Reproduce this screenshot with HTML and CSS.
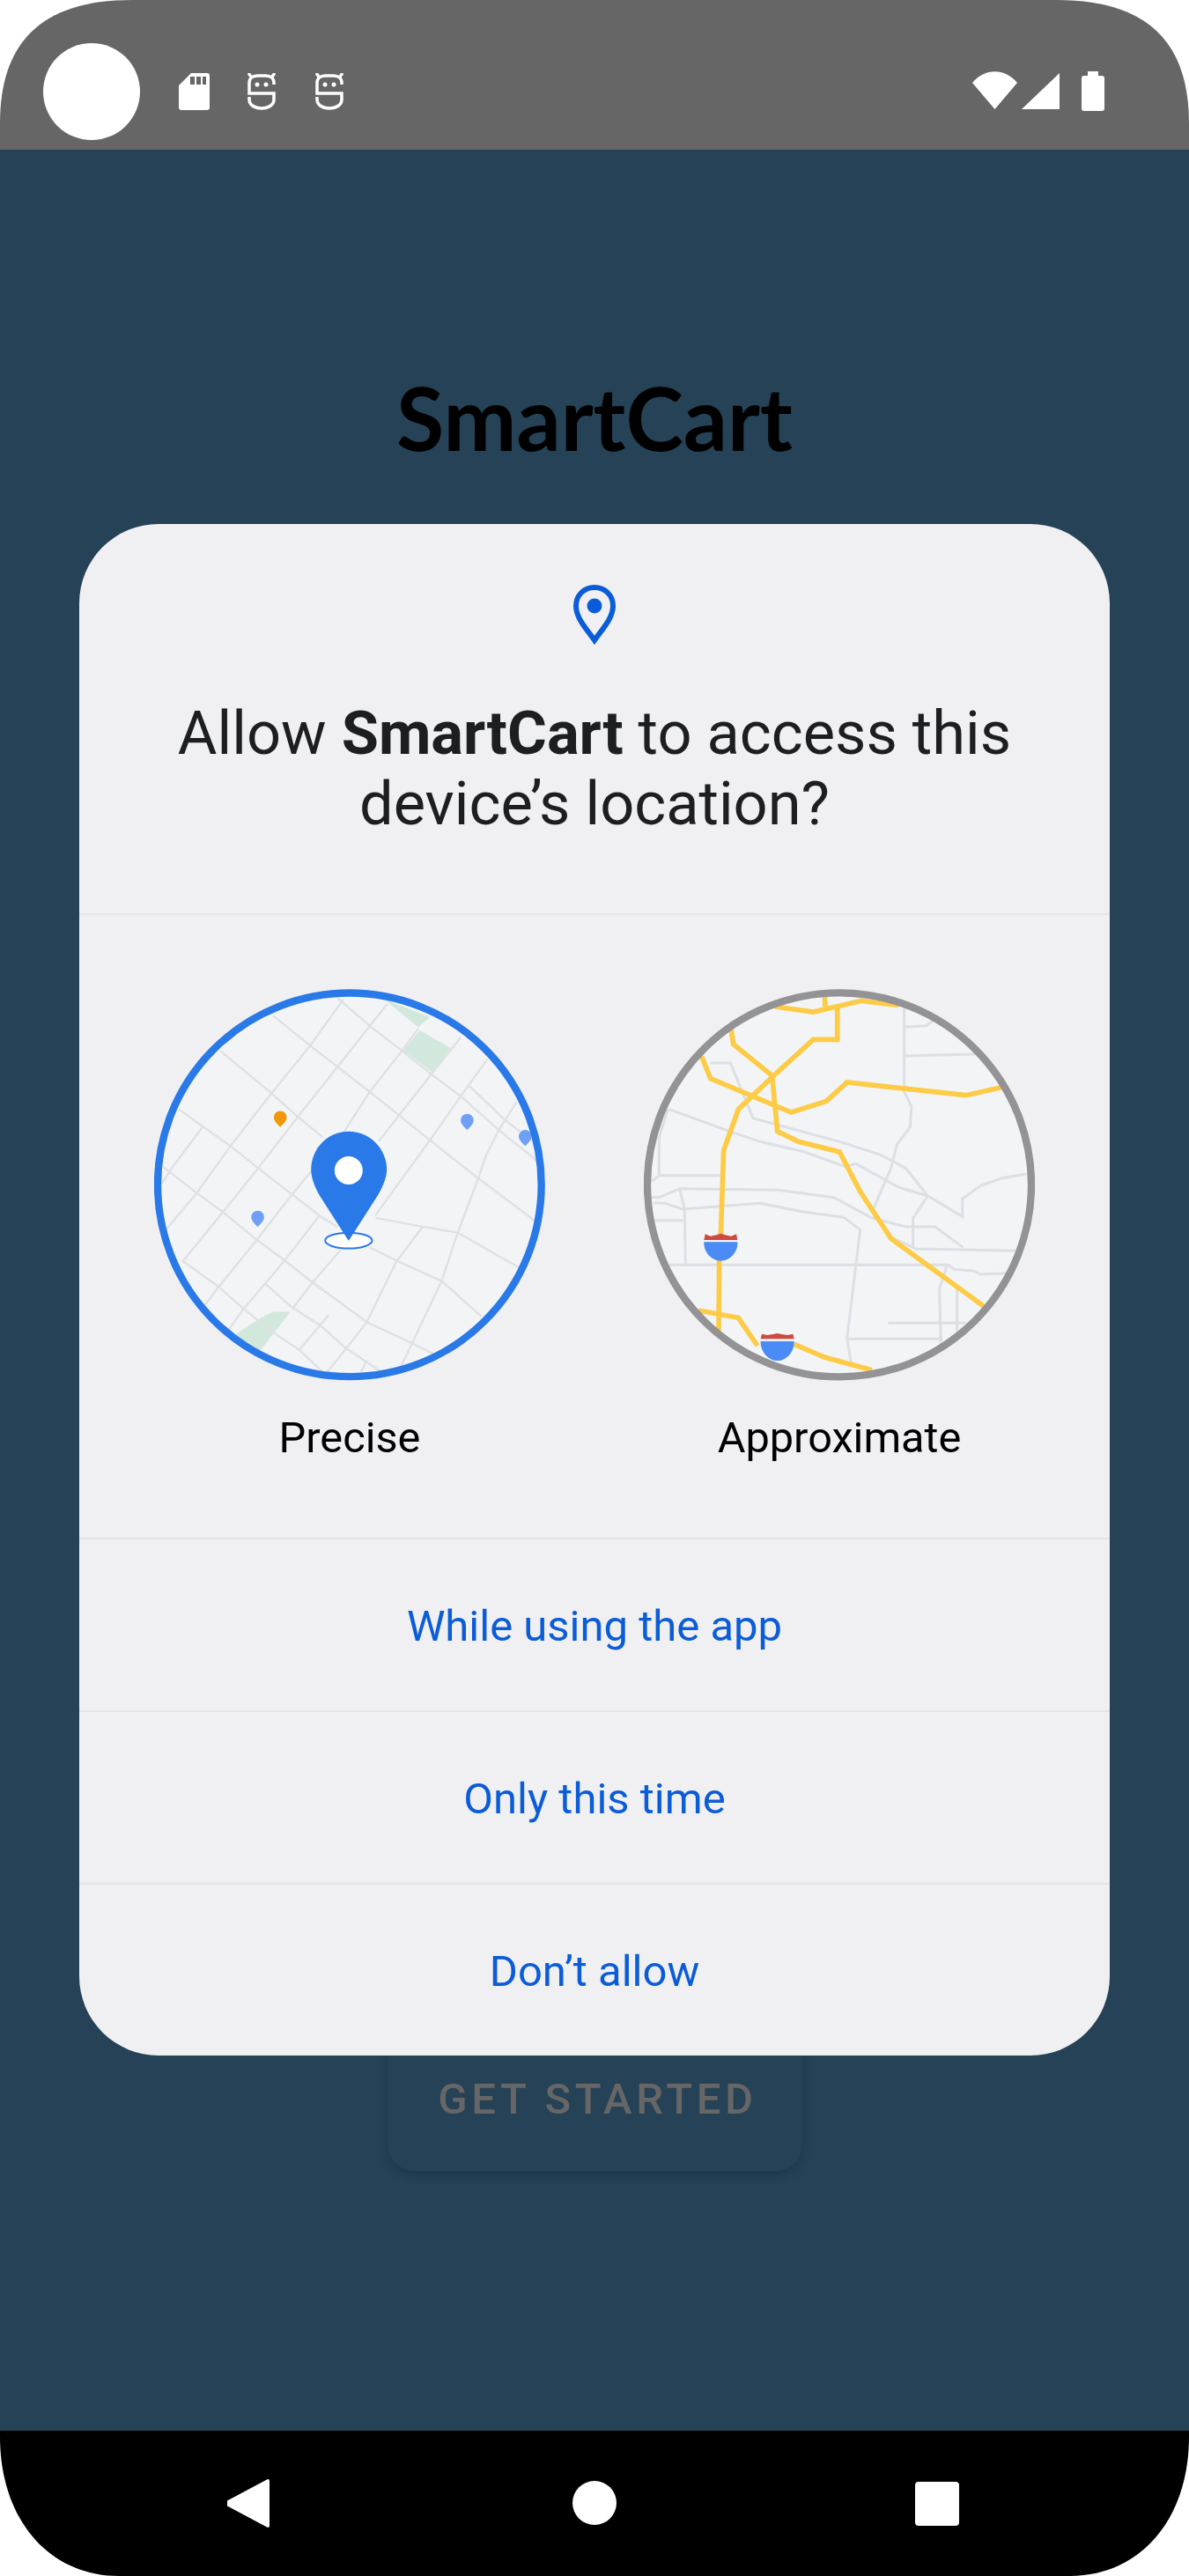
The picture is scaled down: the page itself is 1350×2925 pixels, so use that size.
FILE: index.html

```html
<!DOCTYPE html>
<html lang="en">
<head>
    <meta charset="UTF-8">
    <meta name="viewport" content="width=device-width, initial-scale=1.0">
    <title>SmartCart</title>
    <link rel="stylesheet" href="styles.css">
</head>
<body>
    <div class="device">
        <header class="status-bar">
            <div class="status-left">
                <span class="camera"></span>
                <svg class="icon-sd" viewBox="0 0 35 42">
                    <path fill="#fff" fill-rule="evenodd" d="M14 0H32a3 3 0 0 1 3 3V39a3 3 0 0 1-3 3H3a3 3 0 0 1-3-3V14ZM13 4V13H18V4ZM20 4V13H25V4ZM27 4V13H31V4Z"/>
                </svg>
                <svg class="icon-debug" viewBox="0 0 32 42">
                    <g fill="none" stroke="#fff" stroke-width="3.500">
                        <path d="M30 13V11C30 6 26 3 21 3H11C6 3 2 6 2 11V23H30V30C30 36 24 40 16 40S2 36 2 30V27"/>
                        <path d="M4 4L1 0M28 4L31 0"/>
                    </g>
                    <circle cx="11" cy="13" r="2.500" fill="#fff"/>
                    <circle cx="21" cy="13" r="2.500" fill="#fff"/>
                </svg>
                <svg class="icon-debug" viewBox="0 0 32 42">
                    <g fill="none" stroke="#fff" stroke-width="3.500">
                        <path d="M30 13V11C30 6 26 3 21 3H11C6 3 2 6 2 11V23H30V30C30 36 24 40 16 40S2 36 2 30V27"/>
                        <path d="M4 4L1 0M28 4L31 0"/>
                    </g>
                    <circle cx="11" cy="13" r="2.500" fill="#fff"/>
                    <circle cx="21" cy="13" r="2.500" fill="#fff"/>
                </svg>
            </div>
            <div class="status-right">
                <svg class="icon-wifi" viewBox="0 0 51 43"><path fill="#fff" d="M0 13C14 -4 37 -4 51 13L25.500 43Z"/></svg>
                <svg class="icon-signal" viewBox="0 0 43 41"><path fill="#fff" d="M43 0V41H0Z"/></svg>
                <svg class="icon-battery" viewBox="0 0 26 45"><path fill="#fff" d="M7 0H19V5H23a3 3 0 0 1 3 3V42a3 3 0 0 1-3 3H3a3 3 0 0 1-3-3V8a3 3 0 0 1 3-3H7Z"/></svg>
            </div>
        </header>

        <main class="app">
            <h1 class="app-title">SmartCart</h1>
            <div class="start-btn">GET STARTED</div>

            <section class="dialog">
                <div class="dialog-head">
                    <svg class="icon-pin" viewBox="0 0 48 69">
                        <path fill="none" stroke="#0b5cd8" stroke-width="6" d="M24 3C12 3 3 12 3 24C3 38 15 50 24 63C33 50 45 38 45 24C45 12 36 3 24 3Z"/>
                        <circle cx="24" cy="24" r="8.500" fill="#0b5cd8"/>
                    </svg>
                    <h2 class="dialog-title">Allow <b>SmartCart</b> to access this device’s location?</h2>
                </div>

                <div class="accuracy">
                    <div class="accuracy-item">
                        <svg class="map" viewBox="75 70 1333 1335">
                            <defs>
                                <clipPath id="clip-precise"><circle cx="741" cy="737" r="654"/></clipPath>
                            </defs>
                            <g clip-path="url(#clip-precise)">
                                <rect x="75" y="70" width="1333" height="1335" fill="#f2f4f6"/>
                                <g fill="#d3e8dc">
                                    <path d="M860 105L1015 165L975 200Z"/>
                                    <path d="M980 210L1085 270L1025 355L925 280Z"/>
                                    <path d="M340 1255L440 1190L480 1170H540L430 1310Z"/>
                                </g>
                                <g fill="none" stroke="#dfe0e3" stroke-width="7">
                                    <polyline points="480,160 610,265 700,335 810,420 910,500 1015,585 1180,715 1380,865"/>
                                    <polyline points="300,280 475,425 565,505 650,575"/>
                                    <polyline points="700,100 810,195 920,280 1020,360 1120,435 1250,550 1380,655"/>
                                    <polyline points="1150,400 1270,515 1340,570"/>
                                    <polyline points="160,480 335,605 430,680 545,770 650,850 700,880"/>
                                    <polyline points="105,675 220,765 310,830 425,925 520,995 615,1070 800,1205 950,1275 1030,1315"/>
                                    <polyline points="170,995 295,1085 380,1160 480,1240 570,1300 650,1375"/>
                                    <polyline points="455,1075 545,1155 640,1215 730,1295 850,1375"/>
                                    <polyline points="100,735 135,680 240,540"/>
                                    <polyline points="115,890 220,765 335,605 475,425 605,265 720,105"/>
                                    <polyline points="175,995 310,830 430,680 565,505 700,335 870,120"/>
                                    <polyline points="250,1145 295,1085 425,925 545,770 720,560 810,420 920,280 975,205"/>
                                    <polyline points="330,1230 380,1160 520,995 640,840"/>
                                    <polyline points="550,1155 615,1070 710,960"/>
                                    <polyline points="570,1300 670,1180"/>
                                    <polyline points="665,1375 730,1295 800,1205 900,1000 990,880"/>
                                    <polyline points="840,590 910,500 1020,360 1120,235"/>
                                    <polyline points="830,840 1015,585 1120,435 1210,310"/>
                                    <polyline points="1110,900 1180,715 1205,640 1250,550 1310,455"/>
                                    <polyline points="830,850 990,880 1110,900 1320,1020"/>
                                    <polyline points="810,950 900,995 1055,1065 1190,1185"/>
                                    <polyline points="915,1360 1055,1065 1110,900"/>
                                    <polyline points="780,1375 800,1335"/>
                                </g>
                                <path fill="#f0980a" d="M505 485a22 22 0 0 1 22 22C527 520 515 530 505 540C495 530 483 520 483 507A22 22 0 0 1 505 485Z"/>
                                <g fill="#6fa0f5">
                                    <path d="M1142 495a22 22 0 0 1 22 22C1164 530 1152 540 1142 550C1132 540 1120 530 1120 517A22 22 0 0 1 1142 495Z"/>
                                    <path d="M1340 550a22 22 0 0 1 22 22C1362 585 1350 595 1340 605C1330 595 1318 585 1318 572A22 22 0 0 1 1340 550Z"/>
                                    <path d="M428 825a22 22 0 0 1 22 22C450 860 438 870 428 880C418 870 406 860 406 847A22 22 0 0 1 428 825Z"/>
                                </g>
                                <ellipse cx="738" cy="927" rx="80" ry="27" fill="#fff" stroke="#2979e8" stroke-width="6"/>
                                <path fill="#2979e8" d="M738 555C665 555 610 615 610 685C610 715 625 750 640 775L738 928L836 775C851 750 868 715 868 685C868 615 811 555 738 555Z"/>
                                <circle cx="738" cy="688" r="48" fill="#fff"/>
                            </g>
                            <circle cx="741" cy="737" r="654" fill="none" stroke="#2979e8" stroke-width="25"/>
                        </svg>
                        <span class="accuracy-label">Precise</span>
                    </div>
                    <div class="accuracy-item">
                        <svg class="map" viewBox="93 70 1332 1335">
                            <defs>
                                <clipPath id="clip-approx"><circle cx="759" cy="737" r="654"/></clipPath>
                            </defs>
                            <g clip-path="url(#clip-approx)">
                                <rect x="93" y="70" width="1332" height="1335" fill="#f2f4f6"/>
                                <g fill="none" stroke="#dcdfe4" stroke-width="9">
                                    <polyline points="180,480 400,560 490,590 640,625 780,675 815,665 960,745 1060,775 1178,845 1178,785 1240,740 1310,715 1395,700"/>
                                    <polyline points="320,322 388,322 465,510 760,590 900,635 985,680 1060,775 1010,850 1010,950"/>
                                    <polyline points="980,130 980,420 1005,470 1000,540 955,600 935,680 870,830"/>
                                    <polyline points="980,200 1055,195 1075,180"/>
                                    <polyline points="980,298 1220,292"/>
                                    <polyline points="175,480 145,575 145,705 120,725"/>
                                    <polyline points="145,705 355,705"/>
                                    <polyline points="120,780 150,778 215,750 550,755 740,780 870,850 985,880 1085,880 1180,950"/>
                                    <polyline points="125,798 165,800 225,820 490,800 640,830 775,848 830,890 785,1260 800,1350"/>
                                    <polyline points="215,750 232,820 235,1010"/>
                                    <polyline points="130,858 225,858"/>
                                    <polyline points="180,1010 1130,1010 1150,1025 1215,1030 1240,1042 1330,1038"/>
                                    <polyline points="935,915 1020,955 1360,962"/>
                                    <polyline points="1125,1015 1100,1090 1105,1280"/>
                                    <polyline points="1160,1090 1160,1240"/>
                                    <polyline points="925,1208 1190,1208"/>
                                    <polyline points="785,1262 1110,1262"/>
                                </g>
                                <g fill="none" stroke="#fdcb45" stroke-width="17">
                                    <polyline points="540,130 670,148 835,110 960,125"/>
                                    <polyline points="710,90 710,130"/>
                                    <polyline points="752,130 752,242 670,242 530,370 415,480 365,620 355,910"/>
                                    <polyline points="350,990 348,1240"/>
                                    <polyline points="390,205 398,258 530,365 548,555 620,590 760,625 830,760 935,920 1250,1150"/>
                                    <polyline points="290,300 320,375 595,490 715,452 785,388 1190,432 1310,405"/>
                                    <polyline points="280,1165 415,1190 480,1285"/>
                                    <polyline points="605,1280 710,1325 870,1368"/>
                                </g>
                                <g class="shield">
                                    <path fill="#d0493e" d="M298 925L302 905L320 912L340 908L355 903L370 908L390 912L408 905L412 925Z"/>
                                    <path fill="#4a8bf5" d="M298 932H412C414 968 385 996 355 996S296 968 298 932Z"/>
                                </g>
                                <g class="shield" transform="translate(193 340)">
                                    <path fill="#d0493e" d="M298 922L302 905L320 909L340 906L355 903L370 906L390 909L408 905L412 922Z"/>
                                    <path fill="#4a8bf5" d="M298 930H412C414 965 385 996 355 996S296 965 298 930Z"/>
                                </g>
                            </g>
                            <circle cx="759" cy="737" r="654" fill="none" stroke="#939396" stroke-width="25"/>
                        </svg>
                        <span class="accuracy-label">Approximate</span>
                    </div>
                </div>

                <div class="dialog-action">While using the app</div>
                <div class="dialog-action">Only this time</div>
                <div class="dialog-action">Don’t allow</div>
            </section>
        </main>

        <nav class="nav-bar">
            <svg class="nav-back" viewBox="0 0 48 55"><path fill="#fff" d="M46 0a2 2 0 0 1 2 2V53a2 2 0 0 1-2 2L1 31a4 4 0 0 1 0-7Z"/></svg>
            <span class="nav-home"></span>
            <span class="nav-recent"></span>
        </nav>
    </div>
</body>
</html>
```

FILE: styles.css

```css
* {
    box-sizing: border-box;
}
body {
    margin: 0;
    background: #fff;
    font-family: Roboto, sans-serif;
}
.device {
    width: 1350px;
    height: 2925px;
    display: flex;
    flex-direction: column;
    clip-path: path("M0 140C0 50 45 0 150 0H1200C1305 0 1350 50 1350 140V2767C1350 2860 1295 2925 1215 2925H135C55 2925 0 2860 0 2767Z");
}

/* status bar */
.status-bar {
    height: 170px;
    background: #666;
    display: flex;
    justify-content: space-between;
    padding: 0 96px 0 49px;
}
.status-left {
    display: flex;
    align-items: flex-start;
}
.camera {
    width: 110px;
    height: 110px;
    margin-top: 49px;
    border-radius: 50%;
    background: #fff;
}
.icon-sd {
    width: 35px;
    height: 42px;
    margin: 83px 43px 0 44px;
}
.icon-debug {
    width: 32px;
    height: 42px;
    margin: 83px 45px 0 0;
}
.status-right {
    display: flex;
    align-items: flex-start;
    padding-top: 81px;
}
.icon-wifi {
    width: 51px;
    height: 43px;
    margin-right: 5px;
}
.icon-signal {
    width: 43px;
    height: 41px;
    margin: 2px 25px 0 0;
}
.icon-battery {
    width: 26px;
    height: 45px;
}

/* app behind the dialog */
.app {
    position: relative;
    flex: 1;
    background: #254257;
    display: flex;
    flex-direction: column;
    align-items: center;
    padding-top: 246px;
}
.app-title {
    margin: 0;
    height: 116px;
    font-family: Lato, sans-serif;
    font-size: 99px;
    line-height: 116px;
    font-weight: 700;
    color: #000;
}
.start-btn {
    width: 471px;
    height: 164px;
    margin-top: 1769px;
    padding-left: 7px;
    border-radius: 30px;
    background: #254257;
    box-shadow: 0 5px 12px rgba(0, 0, 0, 0.16);
    color: #666;
    font-size: 49px;
    font-weight: 500;
    letter-spacing: 4.700px;
    text-align: center;
    line-height: 166px;
}

/* permission dialog */
.dialog {
    position: absolute;
    top: 425px;
    left: 90px;
    width: 1170px;
    height: 1739px;
    background: #f0f0f3;
    border-radius: 90px;
    overflow: hidden;
    display: flex;
    flex-direction: column;
}
.dialog-head {
    height: 442px;
    padding-top: 69px;
    text-align: center;
}
.icon-pin {
    display: block;
    width: 48px;
    height: 69px;
    margin: 0 auto 60px;
}
.dialog-title {
    margin: 0 auto;
    width: 1000px;
    font-size: 68.600px;
    line-height: 80px;
    font-weight: 400;
    color: #1c1e21;
}
.dialog-title b {
    font-weight: 700;
}
.accuracy {
    height: 709px;
    padding-top: 84px;
    border-top: 2px solid #e4e4e7;
    display: flex;
    justify-content: center;
    gap: 112px;
}
.accuracy-item {
    width: 444px;
    display: flex;
    flex-direction: column;
    align-items: center;
}
.map {
    display: block;
    width: 444px;
    height: 445px;
}
.accuracy-label {
    margin-top: 35px;
    font-size: 48.700px;
    line-height: 60px;
    color: #000;
}
.dialog-action {
    flex: 1;
    padding-top: 2px;
    border-top: 2px solid #e4e4e7;
    display: flex;
    align-items: center;
    justify-content: center;
    font-size: 49px;
    color: #0b5cd8;
}

/* navigation bar */
.nav-bar {
    position: relative;
    height: 165px;
    background: #000;
}
.nav-back {
    position: absolute;
    left: 258px;
    top: 55px;
    width: 48px;
    height: 55px;
}
.nav-home {
    position: absolute;
    left: 650px;
    top: 57px;
    width: 50px;
    height: 50px;
    border-radius: 50%;
    background: #fff;
}
.nav-recent {
    position: absolute;
    left: 1039px;
    top: 58px;
    width: 50px;
    height: 50px;
    border-radius: 4px;
    background: #fff;
}
```
